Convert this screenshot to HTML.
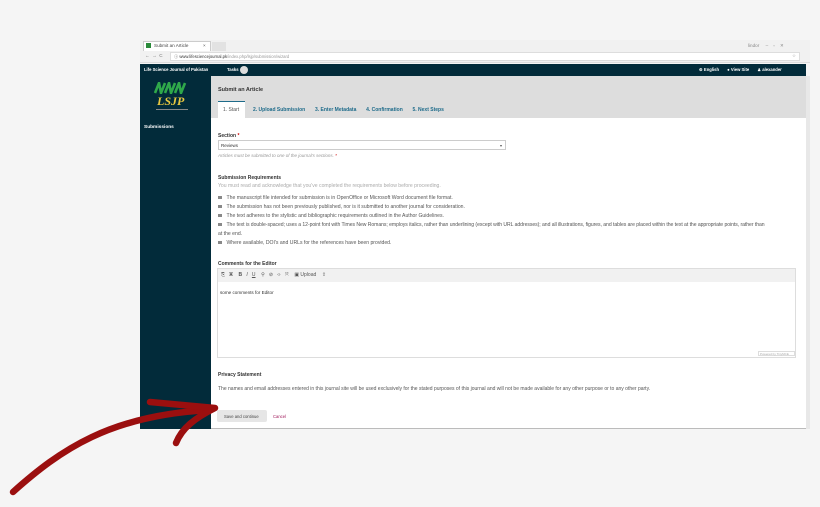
<!DOCTYPE html>
<html><head><meta charset="utf-8"><style>
*{margin:0;padding:0;box-sizing:border-box}
body{width:820px;height:507px;background:#f5f5f5;font-family:"Liberation Sans",sans-serif;position:relative;overflow:hidden;color:#333}
.a{position:absolute}
.t{font-size:4.6px;color:#555;white-space:nowrap}
.l{font-size:5.1px;color:#555}
.cb{display:inline-block;width:3.5px;height:3.5px;background:#888;margin-right:5px;vertical-align:middle}
</style></head><body>
<div class="a" style="left:140px;top:40px;width:670px;height:23px;background:#f1f1f1;border-bottom:1px solid #ddd"></div>
<div class="a" style="left:143px;top:41px;width:68px;height:10px;background:#fff;border:1px solid #ccc;border-bottom:none"></div>
<div class="a" style="left:146px;top:43px;width:5px;height:5px;background:#2a8a3a"></div>
<div class="a t" style="left:154px;top:43px;color:#444">Submit an Article</div>
<div class="a t" style="left:203px;top:43px">×</div>
<div class="a" style="left:212px;top:42px;width:14px;height:9px;background:#e2e2e2"></div>
<div class="a t" style="left:748px;top:43px;color:#888">lindor&nbsp;&nbsp;&nbsp;&nbsp;&nbsp;–&nbsp;&nbsp;&nbsp;&nbsp;▫&nbsp;&nbsp;&nbsp;&nbsp;✕</div>
<div class="a t" style="left:145px;top:53px;color:#777">←&nbsp; →&nbsp; C</div>
<div class="a" style="left:170px;top:52px;width:630px;height:9px;background:#fff;border:1px solid #ddd"></div>
<div class="a t" style="left:174px;top:54px;font-size:4.2px;color:#333">ⓘ www.lifesciencejournal.pk<span style="color:#999">/index.php/lsjp/submission/wizard</span></div>
<div class="a t" style="left:792px;top:53px;color:#999">☆</div>
<div class="a" style="left:140px;top:64px;width:666px;height:12px;background:#022b3a"></div>
<div class="a t" style="left:144px;top:67px;color:#fff;font-weight:bold;font-size:4.2px">Life Science Journal of Pakistan</div>
<div class="a t" style="left:227px;top:67px;color:#fff;font-weight:bold;font-size:4.2px">Tasks</div>
<div class="a" style="left:240px;top:66px;width:8px;height:8px;border-radius:50%;background:#ddd"></div>
<div class="a t" style="left:699px;top:67px;color:#fff;font-weight:bold;font-size:4.2px">⚙ English&nbsp;&nbsp;&nbsp;&nbsp;&nbsp;&nbsp;&nbsp;● View Site&nbsp;&nbsp;&nbsp;&nbsp;&nbsp;&nbsp;&nbsp;♟ alexander</div>
<div class="a" style="left:140px;top:76px;width:71px;height:353px;background:#022b3a"></div>
<svg class="a" style="left:154px;top:82px" width="34" height="12" viewBox="0 0 34 12">
<g fill="none" stroke="#2fa84a" stroke-width="2.6" stroke-linejoin="miter">
<path d="M1 11 L5 1 L7 11 L11 1"/><path d="M11 11 L15 1 L17 11 L21 1"/><path d="M21 11 L25 1 L27 11 L31 1"/>
</g></svg>
<div class="a" style="left:157px;top:94px;font-family:'Liberation Serif',serif;font-style:italic;font-weight:bold;font-size:12px;color:#e8c840">LSJP</div>
<div class="a" style="left:156px;top:109px;width:32px;height:1px;background:#888"></div>
<div class="a t" style="left:144px;top:125px;color:#fff;font-weight:bold;font-size:4.8px">Submissions</div>
<div class="a" style="left:211px;top:76px;width:595px;height:42px;background:#ddd"></div>
<div class="a t" style="left:218px;top:87px;color:#333;font-weight:bold;font-size:5.5px">Submit an Article</div>
<div class="a" style="left:218px;top:101px;width:27px;height:17px;background:#fff;border-top:1px solid #1e6b8a"></div>
<div class="a t" style="left:223px;top:107px;color:#555;font-size:5px">1. Start</div>
<div class="a t" style="left:253px;top:107px;color:#1e6b8a;font-weight:bold;font-size:5px">2. Upload Submission&nbsp;&nbsp;&nbsp;&nbsp;&nbsp;&nbsp;&nbsp;3. Enter Metadata&nbsp;&nbsp;&nbsp;&nbsp;&nbsp;&nbsp;&nbsp;4. Confirmation&nbsp;&nbsp;&nbsp;&nbsp;&nbsp;&nbsp;&nbsp;5. Next Steps</div>
<div class="a" style="left:211px;top:118px;width:595px;height:311px;background:#fff;border-bottom:1px solid #bbb"></div>
<div class="a" style="left:806px;top:76px;width:4px;height:353px;background:#e8e8e8"></div>
<div class="a t" style="left:218px;top:133px;color:#333;font-weight:bold;font-size:5px">Section <span style="color:#c00">*</span></div>
<div class="a" style="left:218px;top:140px;width:288px;height:10px;border:1px solid #ccc;background:#fff"></div>
<div class="a t" style="left:221px;top:143px;color:#333;font-size:4.5px">Reviews</div>
<div class="a t" style="left:500px;top:143px;font-size:4px">▾</div>
<div class="a t" style="left:218px;top:153px;color:#999;font-style:italic;font-size:4.5px">Articles must be submitted to one of the journal's sections. <span style="color:#c00">*</span></div>
<div class="a t" style="left:218px;top:175px;color:#333;font-weight:bold;font-size:5px">Submission Requirements</div>
<div class="a t l" style="left:218px;top:183px;color:#aaa">You must read and acknowledge that you've completed the requirements below before proceeding.</div>
<div class="a t l" style="left:218px;top:195px"><span class="cb"></span>The manuscript file intended for submission is in OpenOffice or Microsoft Word document file format.</div>
<div class="a t l" style="left:218px;top:204px"><span class="cb"></span>The submission has not been previously published, nor is it submitted to another journal for consideration.</div>
<div class="a t l" style="left:218px;top:213px"><span class="cb"></span>The text adheres to the stylistic and bibliographic requirements outlined in the Author Guidelines.</div>
<div class="a t l" style="left:218px;top:222px;letter-spacing:-0.05px"><span class="cb"></span>The text is double-spaced; uses a 12-point font with Times New Romans; employs italics, rather than underlining (except with URL addresses); and all illustrations, figures, and tables are placed within the text at the appropriate points, rather than</div>
<div class="a t l" style="left:218px;top:231px">at the end.</div>
<div class="a t l" style="left:218px;top:240px"><span class="cb"></span>Where available, DOI's and URLs for the references have been provided.</div>
<div class="a t" style="left:218px;top:261px;color:#333;font-weight:bold;font-size:5px">Comments for the Editor</div>
<div class="a" style="left:217px;top:268px;width:579px;height:90px;border:1px solid #ddd;background:#fff"></div>
<div class="a" style="left:218px;top:269px;width:577px;height:13px;background:#f1f1f1"></div>
<div class="a t" style="left:221px;top:272px;color:#555;font-size:5px">⎘&nbsp;&nbsp; ▣&nbsp;&nbsp;&nbsp; <b>B</b>&nbsp;&nbsp; <i>I</i>&nbsp;&nbsp; <u>U</u>&nbsp;&nbsp;&nbsp; ⚲&nbsp;&nbsp; ⊘&nbsp;&nbsp; ‹›&nbsp;&nbsp; ⤧&nbsp;&nbsp;&nbsp; ▣ Upload&nbsp;&nbsp;&nbsp; ⇪</div>
<div class="a t" style="left:220px;top:290px;color:#333;font-size:4.6px">some comments for Editor</div>
<div class="a" style="left:758px;top:351px;width:37px;height:5px;border:1px solid #ddd"></div>
<div class="a t" style="left:760px;top:352px;color:#aaa;font-size:3px">Powered by TinyMCE</div>
<div class="a t" style="left:218px;top:372px;color:#333;font-weight:bold;font-size:5px">Privacy Statement</div>
<div class="a t" style="left:218px;top:386px;font-size:5px">The names and email addresses entered in this journal site will be used exclusively for the stated purposes of this journal and will not be made available for any other purpose or to any other party.</div>
<div class="a" style="left:217px;top:410px;width:50px;height:12px;background:#e6e6e6;border-radius:2px"></div>
<div class="a t" style="left:224px;top:414px;color:#444;font-size:4.2px">Save and continue</div>
<div class="a t" style="left:273px;top:414px;color:#a0185a;font-size:4.2px">Cancel</div>
<svg class="a" style="left:0;top:0" width="820" height="507" viewBox="0 0 820 507">
<g fill="none" stroke="#9b0f0f" stroke-width="6.5" stroke-linecap="round" stroke-linejoin="round">
<path d="M13 492 C60 450 110 415 210 410"/>
<path d="M150 402 L215 408 C195 418 182 428 176 443"/>
</g>
</svg>
</body></html>
